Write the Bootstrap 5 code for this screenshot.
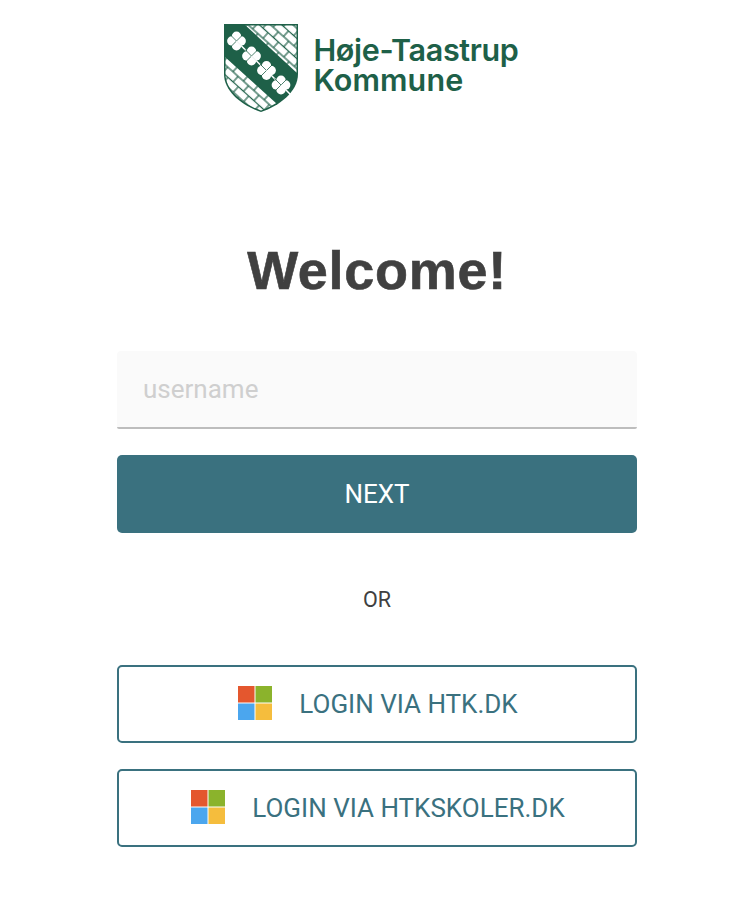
<!DOCTYPE html>
<html lang="en">
<head>
<meta charset="utf-8">
<title>Welcome</title>
<link href="https://cdn.jsdelivr.net/npm/bootstrap@5.3.0/dist/css/bootstrap.min.css" rel="stylesheet">
<style>
body{background:#fff;font-family:Roboto,sans-serif;color:#404040}
.page-col{width:520px;padding-top:24px;margin-left:117px}
.logo-row{gap:15px;padding-right:11px}
.logo-svg{width:74px;height:88px;flex:none}
.logo-text{font-family:Inter,sans-serif;font-weight:600;font-size:30.500px;line-height:30px;letter-spacing:-.34px;color:#1e6048;margin-bottom:6px}
.logo-second{letter-spacing:.1px}
.welcome{font-family:"Liberation Sans",sans-serif;font-weight:700;font-size:54px;line-height:60px;color:#404040;margin:128px 0 51px;letter-spacing:.7px;-webkit-text-stroke:.6px #404040}
.user-input.form-control{height:78px;background:#fafafa;border:0;border-bottom:2px solid #bdbdbd;border-radius:4px 4px 2px 2px;padding:0 26px;font-size:26px;color:#404040}
.user-input.form-control::placeholder{color:#cfcfcf}
.next-btn.btn{height:78px;background:#3a717f;border:0;border-radius:5px;color:#fff;font-size:26px;margin-top:26px}
.or-label{font-size:21.500px;line-height:24px;margin:55px 0 53px}
.login-btn.btn{height:78px;background:#fff;border:2px solid #3a717f;border-radius:5px;color:#3a717f;font-size:26px;gap:27px;margin-bottom:26px;padding-left:14px}
.ms-icon{width:34px;height:34px;flex:none;margin-bottom:2px}
</style>
</head>
<body>
<main class="page-col text-center">
  <div class="d-flex justify-content-center align-items-center logo-row">
    <svg class="logo-svg" viewBox="0 0 74 88" aria-hidden="true">
      <defs>
        <pattern id="bricks" width="14" height="15" patternUnits="userSpaceOnUse" patternTransform="translate(3 2) rotate(42)">
          <rect width="14" height="15" fill="#1e6048"/>
          <rect x=".6" y=".6" width="12.800" height="6.300" fill="#fff"/>
          <rect x="-6.400" y="8.100" width="12.800" height="6.300" fill="#fff"/>
          <rect x="7.600" y="8.100" width="12.800" height="6.300" fill="#fff"/>
        </pattern>
        <clipPath id="shield"><path d="M1.500 1.500H72.500V50C72.500 67 54 80.500 37 86.400C20 80.500 1.500 67 1.500 50Z"/></clipPath>
        <g id="clover">
          <circle cx="-4.700" cy="0" r="4.700" fill="#fff"/>
          <circle cx="4.700" cy="0" r="4.700" fill="#fff"/>
          <circle cx="0" cy="-4.700" r="4.700" fill="#fff"/>
          <circle cx="0" cy="4.700" r="4.700" fill="#fff"/>
          <path d="M-6.500-6.500L6.500 6.500M6.500-6.500L-6.500 6.500" stroke="#1e6048" stroke-width=".8"/>
          <path d="M0 0L9.500 9.500" stroke="#fff" stroke-width="1.500"/>
        </g>
      </defs>
      <path d="M0 0H74V50C74 68 55 82 37 88C19 82 0 68 0 50Z" fill="#1e6048"/>
      <g clip-path="url(#shield)">
        <path d="M20 0H74V50Z" fill="url(#bricks)"/>
        <path d="M0 32L53 80L37 92L0 92Z" fill="url(#bricks)"/>
      </g>
      <use href="#clover" x="12.500" y="17"/>
      <use href="#clover" x="27.500" y="32"/>
      <use href="#clover" x="42.500" y="46.500"/>
      <use href="#clover" x="57" y="61"/>
    </svg>
    <div class="logo-text text-start">Høje-Taastrup<br><span class="logo-second">Kommune</span></div>
  </div>
  <h1 class="welcome">Welcome!</h1>
  <form>
    <input class="form-control user-input shadow-none" type="text" placeholder="username">
    <button class="btn next-btn w-100 d-block" type="button">NEXT</button>
  </form>
  <div class="or-label">OR</div>
  <button class="btn login-btn w-100 d-flex justify-content-center align-items-center" type="button">
    <svg class="ms-icon" viewBox="0 0 34 34" aria-hidden="true"><rect width="16.500" height="16.500" fill="#e4572e"/><rect x="17.500" width="16.500" height="16.500" fill="#8bb32c"/><rect y="17.500" width="16.500" height="16.500" fill="#4ba6ee"/><rect x="17.500" y="17.500" width="16.500" height="16.500" fill="#f5bd3d"/></svg>
    <span>LOGIN VIA HTK.DK</span>
  </button>
  <button class="btn login-btn w-100 d-flex justify-content-center align-items-center" type="button">
    <svg class="ms-icon" viewBox="0 0 34 34" aria-hidden="true"><rect width="16.500" height="16.500" fill="#e4572e"/><rect x="17.500" width="16.500" height="16.500" fill="#8bb32c"/><rect y="17.500" width="16.500" height="16.500" fill="#4ba6ee"/><rect x="17.500" y="17.500" width="16.500" height="16.500" fill="#f5bd3d"/></svg>
    <span>LOGIN VIA HTKSKOLER.DK</span>
  </button>
</main>
</body>
</html>
